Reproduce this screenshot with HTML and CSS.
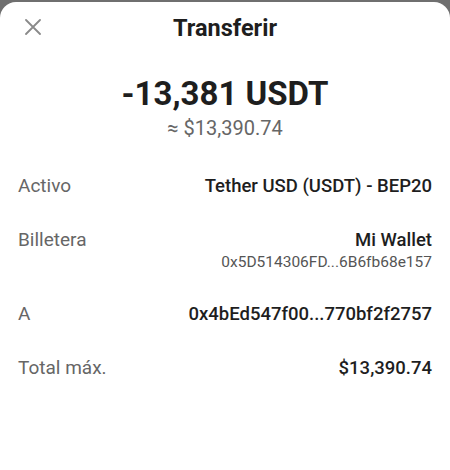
FILE: index.html
```html
<!DOCTYPE html>
<html lang="es">
<head>
<meta charset="utf-8">
<link rel="stylesheet" href="styles.css">
</head>
<body>
<div class="sheet">
  <header class="head">
    <button class="close" aria-label="Cerrar">
      <svg width="16" height="16" viewBox="0 0 16 16"><path d="M1 1L15 15M15 1L1 15" stroke="#8a8a8a" stroke-width="1.8" stroke-linecap="round"/></svg>
    </button>
    <h1 class="title">Transferir</h1>
  </header>
  <section class="amount">
    <div class="big">-13,381 USDT</div>
    <div class="fiat">≈ $13,390.74</div>
  </section>
  <section class="rows">
    <div class="row">
      <span class="label">Activo</span>
      <span class="value">Tether USD (USDT) - BEP20</span>
    </div>
    <div class="row">
      <span class="label">Billetera</span>
      <div class="stack">
        <span class="value">Mi Wallet</span>
        <span class="sub">0x5D514306FD...6B6fb68e157</span>
      </div>
    </div>
    <div class="row">
      <span class="label">A</span>
      <span class="value">0x4bEd547f00...770bf2f2757</span>
    </div>
    <div class="row">
      <span class="label">Total máx.</span>
      <span class="value">$13,390.74</span>
    </div>
  </section>
</div>
</body>
</html>
```
FILE: styles.css
```css
html, body { margin: 0; padding: 0; }
body {
  background: #6f6f6f;
  width: 450px;
  height: 470px;
  overflow: hidden;
  font-family: Roboto, "Liberation Sans", sans-serif;
}
.sheet {
  margin-top: 2px;
  background: #fff;
  border-radius: 16px 16px 0 0;
  height: 468px;
  padding: 0 18px;
  box-sizing: border-box;
}
.head {
  position: relative;
  height: 52px;
  display: flex;
  align-items: center;
  justify-content: center;
}
.close {
  position: absolute;
  left: 7px;
  top: 17px;
  border: 0;
  background: none;
  padding: 0;
  width: 16px;
  height: 16px;
  display: flex;
}
.title {
  margin: 0;
  font-size: 23.5px;
  font-weight: 700;
  color: #1e1e1e;
  line-height: 28px;
}
.amount {
  display: flex;
  flex-direction: column;
  align-items: center;
  padding-top: 21px;
}
.big {
  font-size: 33px;
  font-weight: 700;
  color: #1e1e1e;
  line-height: 38px;
}
.fiat {
  font-size: 20px;
  color: #666;
  line-height: 24px;
  margin-top: 3px;
}
.rows {
  padding-top: 34px;
  display: flex;
  flex-direction: column;
  gap: 30px;
}
.row {
  display: flex;
  justify-content: space-between;
  align-items: flex-start;
  line-height: 24px;
}
.label {
  font-size: 19px;
  color: #666;
}
.value {
  font-size: 18.5px;
  font-weight: 500;
  color: #1e1e1e;
}
.stack {
  display: flex;
  flex-direction: column;
  align-items: flex-end;
}
.sub {
  font-size: 15.5px;
  color: #555;
  line-height: 20px;
}
```
